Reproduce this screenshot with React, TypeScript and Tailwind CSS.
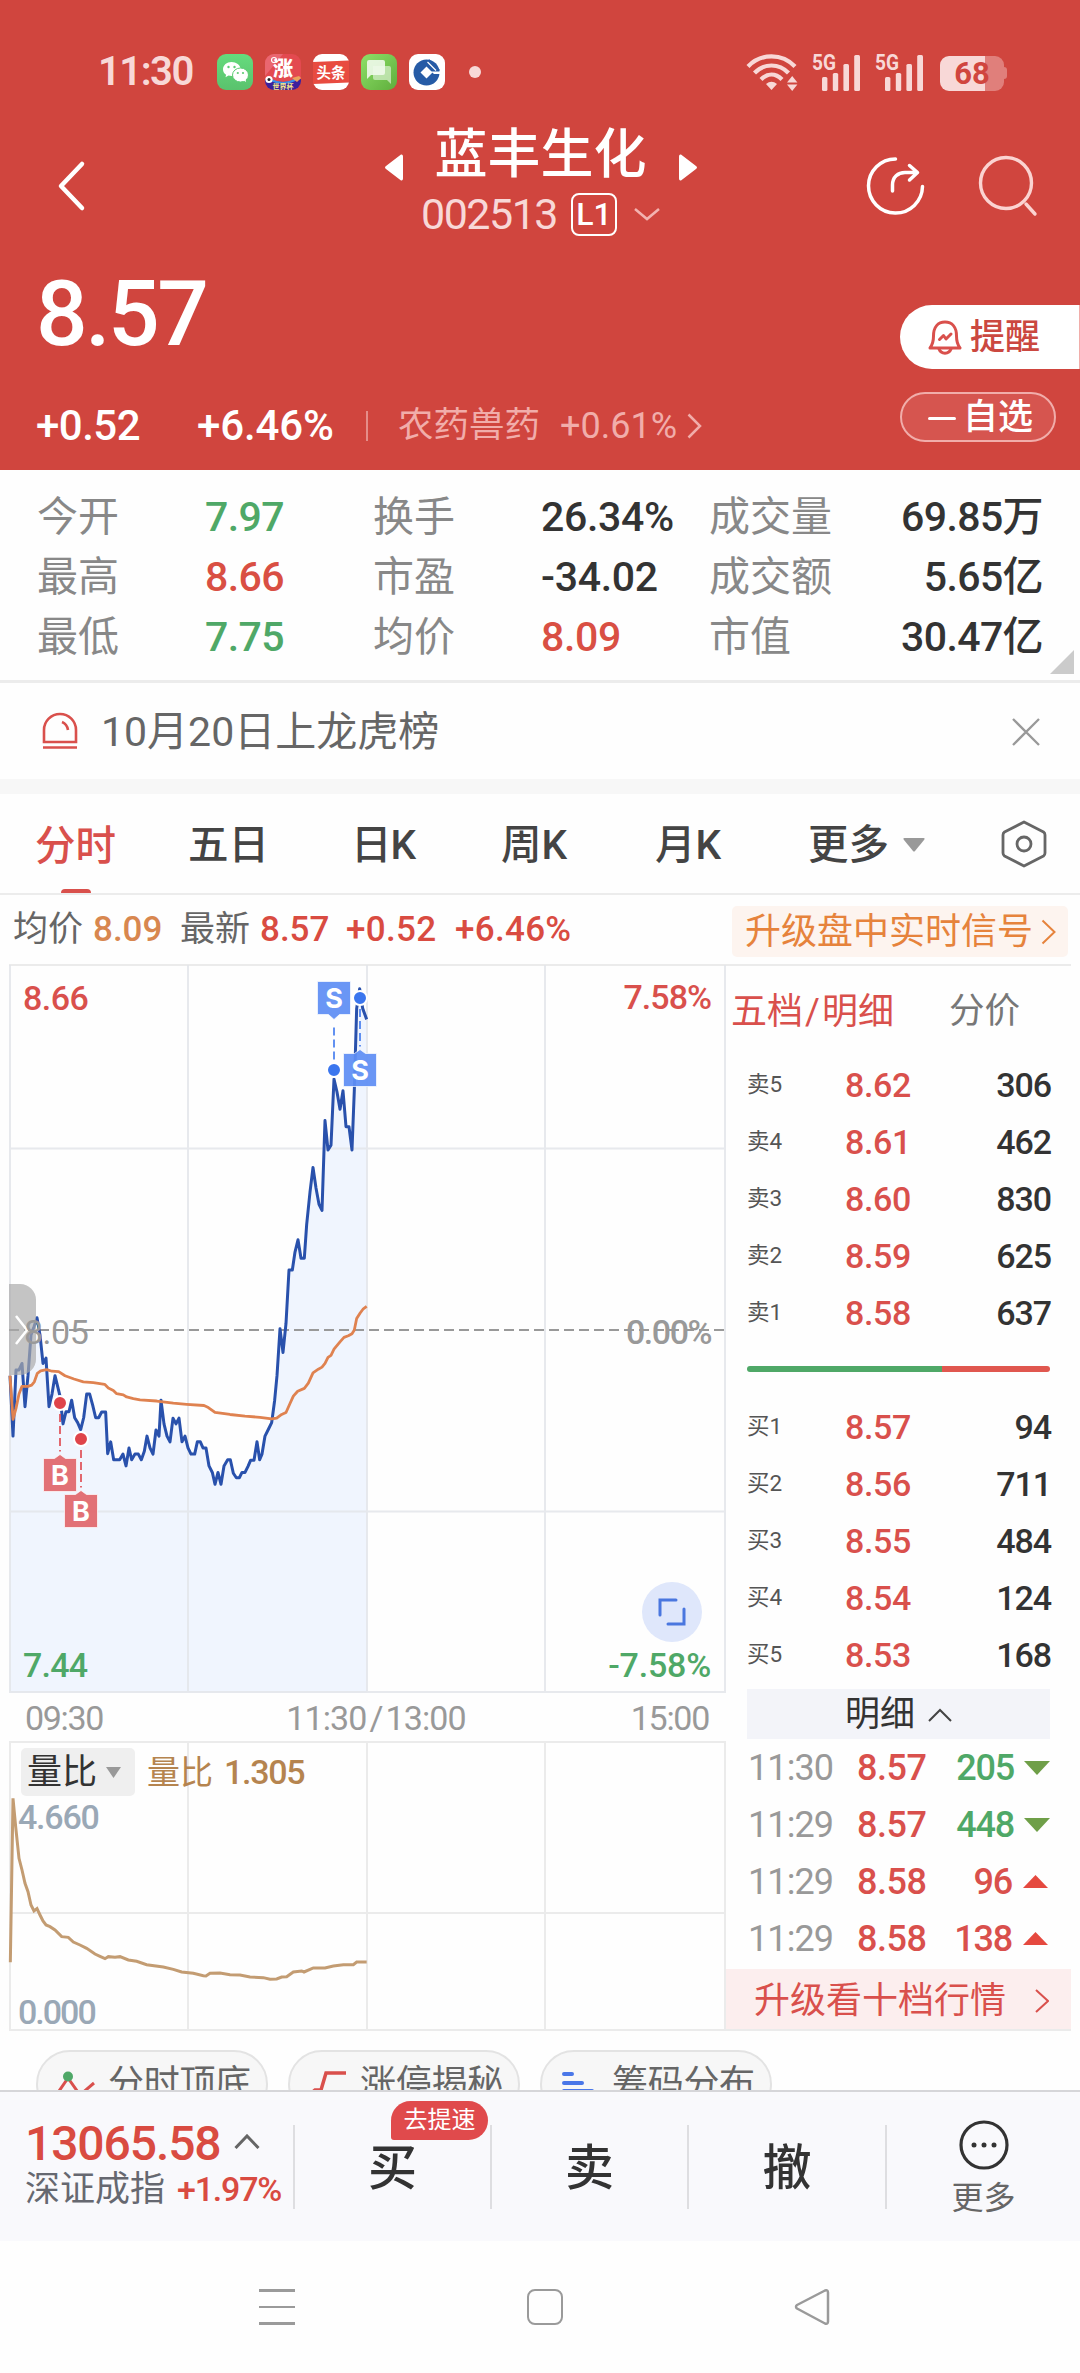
import React from "react";

const PRICE_POINTS =
  "30,1190 39,1338 48,1176 57,1176 66,1160 75,1266 84,1190 93,1090 102,1070 111,1048 120,1090 129,1160 138,1147 147,1266 156,1235 165,1190 174,1220 180,1240 189,1308 198,1278 207,1278 215,1250 224,1293 233,1305 242,1322 251,1293 260,1235 269,1235 278,1262 287,1293 296,1293 305,1279 317,1279 323,1381 332,1352 341,1396 359,1396 369,1382 378,1411 387,1367 395,1396 405,1382 415,1382 424,1396 433,1375 441,1338 450,1367 459,1382 468,1323 477,1338 483,1250 492,1308 501,1338 510,1352 519,1294 528,1308 537,1294 546,1352 555,1338 564,1367 573,1382 584,1382 592,1352 601,1352 609,1367 618,1367 627,1411 637,1427 645,1456 654,1427 663,1456 672,1411 683,1396 691,1396 700,1429 709,1440 718,1440 726,1427 735,1427 744,1412 752,1397 762,1397 771,1352 779,1396 786,1382 795,1338 806,1320 815,1305 824,1250 831,1190 840,1075 849,1133 858,1062 867,931 877,931 885,887 894,857 903,902 913,902 920,820 930,740 939,680 948,730 957,770 966,785 975,565 984,637 993,625 1002,463 1011,495 1020,537 1029,492 1038,580 1047,580 1056,637 1063,490 1070,290 1079,242 1088,290 1100,317";

const AVERAGE_POINTS =
  "30,1190 39,1297 48,1270 57,1235 66,1216 84,1216 95,1213 103,1205 112,1184 122,1178 140,1175 156,1179 176,1180 195,1190 222,1198 250,1205 280,1207 314,1211 325,1220 340,1226 350,1234 370,1237 380,1242 400,1246 420,1249 470,1252 520,1257 560,1260 612,1263 625,1268 645,1280 690,1285 735,1289 780,1292 815,1296 830,1294 845,1285 858,1280 870,1258 880,1240 893,1228 913,1221 925,1208 939,1183 955,1174 966,1169 975,1160 984,1145 993,1140 1002,1125 1020,1107 1032,1096 1045,1092 1056,1087 1063,1078 1070,1050 1080,1037 1090,1026 1100,1020";

const RATIO_POINTS =
  "31,1327 39,835 47,920 57,1015 66,1050 75,1090 84,1115 93,1155 102,1173 111,1166 120,1185 129,1203 138,1215 150,1220 165,1230 185,1250 205,1252 220,1266 240,1275 260,1285 285,1302 300,1309 315,1316 325,1310 345,1312 360,1310 385,1320 410,1324 440,1334 490,1341 520,1348 545,1356 580,1360 610,1367 618,1368 630,1360 660,1359 690,1364 720,1365 750,1371 790,1373 810,1378 830,1377 845,1371 860,1370 880,1356 905,1353 912,1356 940,1344 975,1344 1000,1338 1030,1334 1060,1334 1070,1326 1100,1326";

function Signal() {
  return (
    <svg className="h-[38px] w-[50px] overflow-visible" viewBox="0 0 50 38">
      <text x="0" y="17" fontFamily="Roboto" fontWeight="700" fontSize="21.5" textLength="24" lengthAdjust="spacingAndGlyphs" fill="#f8d8d7">
        5G
      </text>
      <g fill="#f8d8d7">
        <rect x="10" y="24" width="5.4" height="14" rx="1.5" />
        <rect x="20.8" y="20" width="5.4" height="18" rx="1.5" />
        <rect x="31.4" y="11" width="5.6" height="27" rx="1.5" />
        <rect x="42.2" y="2" width="5.8" height="36" rx="1.5" />
      </g>
    </svg>
  );
}

function StatusBar() {
  return (
    <div className="flex h-[144px] items-center pl-[98px] pr-[73px] text-[#f8d8d7]">
      <div className="w-[119px] text-[40px] font-semibold leading-none tracking-[-1.5px]">11:30</div>
      <div className="flex gap-[12px]">
        <svg className="size-9" viewBox="0 0 36 36">
          <defs>
            <linearGradient id="wx" x1="0" y1="0" x2="0" y2="1">
              <stop offset="0" stopColor="#65db7d" />
              <stop offset="1" stopColor="#5ac26d" />
            </linearGradient>
          </defs>
          <rect width="36" height="36" rx="9" fill="url(#wx)" />
          <path d="M14.500 8C9.800 8 6 11.200 6 15.200c0 2.300 1.200 4.200 3.100 5.500L8.500 23.200l3-1.600c1 .3 2 .4 3 .4C19.200 22 23.500 19 23.500 15S19.200 8 14.500 8Z" fill="#fff" />
          <ellipse cx="23.500" cy="21" rx="8" ry="7" fill="#fff" stroke="#5ecb73" strokeWidth="1" />
          <path d="m26 26 3 2-.5-3.500z" fill="#fff" />
          <g fill="#5ecb73">
            <circle cx="11.500" cy="13" r="1.200" /><circle cx="17.500" cy="13" r="1.200" />
            <circle cx="20.800" cy="19" r="1.100" /><circle cx="26" cy="19" r="1.100" />
          </g>
        </svg>
        <svg className="size-9" viewBox="0 0 36 36">
          <defs><clipPath id="zc"><rect width="36" height="36" rx="9" /></clipPath></defs>
          <g clipPath="url(#zc)">
            <rect width="36" height="36" fill="#e34a50" />
            <path d="M0 0h18L0 22z" fill="#ea6670" />
            <path d="M0 25Q18 31 36 25v11H0z" fill="#3c209c" />
            <path d="M6 26Q18 32 30 26" stroke="#3d8fe8" strokeWidth="2" fill="none" />
            <circle cx="4" cy="25.500" r="3.600" fill="#fff" /><circle cx="4" cy="25.500" r="1.500" fill="#222" />
            <path d="M27 24l5 4 4-4-2-2z" fill="#eba35c" />
            <text x="8" y="22" fontFamily="Noto Sans CJK SC" fontWeight="900" fontSize="20" fill="#fff">涨</text>
            <text x="18" y="34.500" textAnchor="middle" fontFamily="Noto Sans CJK SC" fontWeight="700" fontSize="7" fill="#f4e88a">世界杯</text>
            <circle cx="9" cy="6" r="2.500" fill="none" stroke="#fff" strokeWidth="1.200" />
          </g>
        </svg>
        <svg className="size-9" viewBox="0 0 36 36">
          <rect width="36" height="36" rx="9" fill="#fff" />
          <path d="M0 8 36 6.500v22L0 30z" fill="#e84b40" />
          <text x="18" y="23.500" textAnchor="middle" fontFamily="Noto Sans CJK SC" fontWeight="700" fontSize="14.500" fill="#fff">头条</text>
        </svg>
        <svg className="size-9" viewBox="0 0 36 36">
          <defs>
            <linearGradient id="msg" x1="0" y1="0" x2="1" y2="1">
              <stop offset="0" stopColor="#8ee068" />
              <stop offset="1" stopColor="#5fae3c" />
            </linearGradient>
          </defs>
          <rect width="36" height="36" rx="9" fill="url(#msg)" />
          <path d="M12 12h16q2 0 2 2v16l-4-4H14q-2 0-2-2z" fill="#d4edc8" opacity=".75" />
          <path d="M8 6h14q2 0 2 2v11q0 2-2 2H10l-4 4V8q0-2 2-2z" fill="#f0faeb" opacity=".9" />
        </svg>
        <svg className="size-9" viewBox="0 0 36 36">
          <rect width="36" height="36" rx="9" fill="#fff" />
          <circle cx="17.500" cy="18.500" r="13" fill="#265ba6" />
          <path d="M20 5 31 16l-2.500 2L19 8z" fill="#265ba6" />
          <path d="M22 17.500 32 17.500V20L25 20z" fill="#fff" />
          <path d="m11.500 18.500 6-6 6 6-6 6z" fill="#fff" />
          <path d="m18.500 8 8.500 8.500" stroke="#fff" strokeWidth="1.300" />
        </svg>
      </div>
      <div className="ml-[24px] size-[12px] rounded-full bg-[#f8d8d7]" />
      <div className="ml-auto flex items-center">
        <svg className="mr-[12px] h-[38px] w-[54px]" viewBox="0 0 54 38" fill="none" stroke="#f8d8d7" strokeWidth="4.200">
          <path d="M2 13.500C15 0 36 0 49 13.500" />
          <path d="M8.500 20C18 10 33 10 42.500 20" />
          <path d="M15 26.500C21.500 20 29.500 20 36 26.500" />
          <path d="M25.500 37 20 31Q25.500 26.500 31 31z" fill="#f8d8d7" stroke="none" />
          <path d="m41 29.500 5.200-6.500 5.200 6.500zM41 31.500h10.400L46.200 38z" fill="#f8d8d7" stroke="none" />
        </svg>
        <Signal />
        <div className="w-[13px]" />
        <Signal />
        <div className="ml-[15px] mt-[2px] flex items-center">
          <div className="flex h-[35px] w-[64px] items-center justify-center rounded-[9px] bg-[linear-gradient(90deg,#f8d8d7_0_45px,#e07f7b_45px)] text-[31px] font-bold leading-none text-[#d0453e]">68</div>
          <div className="h-[12px] w-[3px] rounded-r-sm bg-[#e07f7b]" />
        </div>
      </div>
    </div>
  );
}

function TitleBar() {
  return (
    <div className="flex h-[116px] justify-between">
      <svg className="ml-[55px] mt-[15px] h-[54px] w-[34px] shrink-0" viewBox="0 0 34 54" fill="none" stroke="#fff" strokeWidth="4.500" strokeLinecap="round" strokeLinejoin="round">
        <path d="M27 5 6 27 27 49" />
      </svg>
      <div className="-mr-[40px] ml-[90px] flex w-[400px] shrink-0 flex-col items-center">
        <div className="-mt-[19px] flex h-[61px] items-center">
          <svg className="mt-[24px] h-[27px] w-[18px]" viewBox="0 0 18 27" fill="#fff"><path d="M16 .5q2-.5 2 2v22q0 2.500-2 2L1 15q-2-1.500 0-3z" /></svg>
          <div className="mx-[32px] text-[53px] font-medium leading-none text-white">蓝丰生化</div>
          <svg className="mt-[24px] h-[27px] w-[18px] rotate-180" viewBox="0 0 18 27" fill="#fff"><path d="M16 .5q2-.5 2 2v22q0 2.500-2 2L1 15q-2-1.500 0-3z" /></svg>
        </div>
        <div className="flex h-[56px] items-center">
          <div className="text-[43px] leading-none tracking-[-1.500px] text-[#f8d8d7]">002513</div>
          <div className="ml-[14px] flex h-[43px] w-[46px] items-center justify-center rounded-[8px] border-2 border-white text-[32px] font-medium leading-none text-white">L1</div>
          <svg className="ml-[17px] h-[14px] w-[26px]" viewBox="0 0 26 14" fill="none" stroke="#f3b3b0" strokeWidth="2.500"><path d="m1 2 12 10L25 2" /></svg>
        </div>
      </div>
      <div className="mt-[9px] flex gap-[51px] pr-[41px]">
        <svg className="size-[64px]" viewBox="0 0 64 64" fill="none" stroke="#fff" strokeWidth="3.500" strokeLinecap="round" strokeLinejoin="round">
          <path d="M33.500 6A27 27 0 1 0 60.500 33.500" />
          <path d="M30.500 38v-6C30.500 24 36 19.500 43 19.500h12M47.500 12.500 55.500 19.500l-8 7.500" />
        </svg>
        <svg className="h-[64px] w-[62px]" viewBox="0 0 62 64" fill="none" stroke="#fbd3d1" strokeWidth="3.400" strokeLinecap="round">
          <circle cx="29" cy="30" r="25.500" />
          <path d="m49 51 9 10" />
        </svg>
      </div>
    </div>
  );
}

function Quote() {
  return (
    <div className="flex h-[210px]">
      <div className="flex flex-1 flex-col pl-[36px]">
        <div className="mt-[9px] text-[91px] font-medium leading-[90px] tracking-[-2.500px] text-white">8.57</div>
        <div className="mt-[45px] flex h-[44px] items-center leading-none">
          <div className="w-[161px] text-[42px] font-medium tracking-[-0.500px] text-white">+0.52</div>
          <div className="w-[169px] text-[42px] font-medium tracking-[-0.100px] text-white">+6.46%</div>
          <div className="h-[30px] w-[2px] bg-[#e58d89]" />
          <div className="ml-[30px] text-[35.500px] text-[#f1adaa]">农药兽药</div>
          <div className="ml-[20px] text-[36px] text-[#f1adaa]">+0.61%</div>
          <svg className="ml-[10px] h-[26px] w-[15px]" viewBox="0 0 15 26" fill="none" stroke="#f1adaa" strokeWidth="2.500"><path d="m1.500 1.500 11.500 11.500-11.500 11.500" /></svg>
        </div>
      </div>
      <div className="flex w-[180px] flex-col">
        <div className="mt-[45px] flex h-[64px] items-center rounded-l-full border-r border-[#f1adaa] bg-white pl-[28px]">
          <svg className="h-[36px] w-[34px]" viewBox="0 0 34 36" fill="none" stroke="#d9504c" strokeWidth="3" strokeLinejoin="round" strokeLinecap="round">
            <path d="M5.500 17C5.500 8 10 3 17 3s11.500 5 11.500 14c0 5 .5 8 3.500 12H2c3-4 3.500-7 3.500-12Z" />
            <path d="M11 30c2 5.500 10 5.500 12 0M11.500 20.500l4-4 2.500 3.500 5-5" />
          </svg>
          <div className="ml-[8px] mt-[1px] text-[35px] font-medium leading-none text-[#cb4840]">提醒</div>
        </div>
        <div className="mt-[23px] flex h-[50px] w-[156px] items-center rounded-full border-2 border-[#f1adaa] bg-[#d6554f] pl-[26px]">
          <div className="mt-[2px] h-[3px] w-[28px] rounded bg-white" />
          <div className="ml-[7px] text-[35px] font-medium leading-none text-white">自选</div>
        </div>
      </div>
    </div>
  );
}

const STATS: [string, string, string, string, string, string][] = [
  ["今开", "7.97", "换手", "26.34%", "成交量", "69.85万"],
  ["最高", "8.66", "市盈", "-34.02", "成交额", "5.65亿"],
  ["最低", "7.75", "均价", "8.09", "市值", "30.47亿"],
];

function Stats() {
  return (
    <div className="relative h-[213px] shrink-0 border-b-[3px] border-[#ececec] pt-[17px]">
      {STATS.map((r, i) => (
        <div key={r[0]} className="flex h-[60px] items-center pl-[37px] text-[41px] leading-none text-[#333]">
          <div className="w-[168px] text-[#888]">{r[0]}</div>
          <div className={"w-[168px] font-medium tracking-[-0.600px] " + (i === 1 ? "text-[#d94f43]" : "text-[#4fa867]")}>{r[1]}</div>
          <div className="w-[168px] text-[#888]">{r[2]}</div>
          <div className={"w-[168px] font-medium tracking-[-0.300px] " + (i === 2 ? "text-[#d94f43]" : "")}>{r[3]}</div>
          <div className="text-[#888]">{r[4]}</div>
          <div className="ml-auto pr-[37px] font-medium tracking-[-0.600px]">{r[5]}</div>
        </div>
      ))}
      <svg className="absolute bottom-[6px] right-[6px] h-[24px] w-[24px]" viewBox="0 0 24 24" fill="#cbcbcb"><path d="M24 0v24H0z" /></svg>
    </div>
  );
}

function Notice() {
  return (
    <div className="flex h-[96px] shrink-0 items-center pl-[41px] pr-[40px]">
      <svg className="h-[38px] w-[38px]" viewBox="0 0 38 38" fill="none" stroke="#d9504c" strokeWidth="2.600">
        <path d="M3 30V18a16 16 0 0 1 32 0v12zM2 35.500h34M21 10q5 2 6 8" />
      </svg>
      <div className="ml-[22px] mt-[3px] text-[41px] leading-none text-[#666]">10月20日上龙虎榜</div>
      <svg className="ml-auto mt-[2px] size-[28px]" viewBox="0 0 28 28" stroke="#999" strokeWidth="2.300"><path d="m1 1 26 26M27 1 1 27" /></svg>
    </div>
  );
}

function Tabs() {
  return (
    <div className="flex h-[101px] shrink-0 items-center border-b-2 border-[#ececec] pl-[35px] text-[40.500px] font-medium leading-none text-[#444]">
      <div className="flex h-full w-[153px] flex-col text-[#d9504c]">
        <div className="mt-[32px]">分时</div>
        <div className="ml-[26px] mt-auto h-[4px] w-[30px] rounded-t bg-[#d9504c]" />
      </div>
      <div className="mt-[4px] w-[163px]">五日</div>
      <div className="mt-[4px] w-[150px] tracking-[-1px]">日K</div>
      <div className="mt-[4px] w-[154px]">周K</div>
      <div className="mt-[4px] w-[153px]">月K</div>
      <div className="mt-[4px]">更多</div>
      <svg className="ml-[14px] mt-[2px] h-[14px] w-[22px]" viewBox="0 0 22 14" fill="#999"><path d="M1.500 0h19q2 0 .5 2l-9 11q-1 1-2 0L1 2Q-.5 0 1.500 0" /></svg>
      <svg className="ml-[76px] h-[48px] w-[46px]" viewBox="0 0 46 48" fill="none" stroke="#666" strokeWidth="2.800" strokeLinejoin="round">
        <path d="M23 2 42.500 12q1.500 1 1.500 3v18q0 2-1.500 3L23 46 3.500 36Q2 35 2 33V15q0-2 1.500-3z" />
        <circle cx="23" cy="24" r="7" />
      </svg>
    </div>
  );
}

function QuoteLine() {
  return (
    <div className="mr-[9px] flex h-[69px] shrink-0 items-center pl-[13px] text-[35px] leading-none text-[#666]">
      <div className="w-[80px]">均价</div>
      <div className="w-[87px] font-medium text-[#d8874f]">8.09</div>
      <div className="w-[80px]">最新</div>
      <div className="w-[86px] font-medium text-[#d94b41]">8.57</div>
      <div className="w-[109px] font-medium tracking-[0.300px] text-[#d94b41]">+0.52</div>
      <div className="font-medium tracking-[0.300px] text-[#d94b41]">+6.46%</div>
      <div className="ml-auto mr-[3px] mt-[4px] flex h-[51px] w-[336px] items-center rounded-[5px] bg-[#fdf4ef] pl-[13px] text-[36px] text-[#e6833c]">
        升级盘中实时信号
        <svg className="ml-[8px] h-[26px] w-[15px]" viewBox="0 0 15 26" fill="none" stroke="#e6833c" strokeWidth="2"><path d="m1.500 1.500 12 11.500-12 11.500" /></svg>
      </div>
    </div>
  );
}

type MarkerProps = { x: number; dotY: number; boxY: number; label: string; color: string; dot: string };

function Marker({ x, dotY, boxY, label, color, dot }: MarkerProps) {
  const below = boxY > dotY;
  const tip = below ? boxY - 4 : boxY + 38;
  return (
    <g>
      <line x1={x} x2={x} y1={below ? dotY + 11 : tip + 8} y2={below ? tip - 3 : dotY - 7} stroke={dot} strokeOpacity="0.8" strokeWidth="2" strokeDasharray="8 4" />
      <circle cx={x} cy={dotY} r="7" fill={dot} stroke="#fff" strokeWidth="2" />
      <path
        d={
          below
            ? `M${x - 16.5} ${boxY}h11l5.500-4 5.500 4h11v33h-33z`
            : `M${x - 16.5} ${boxY}h33v33h-11l-5.500 5-5.500-5h-11z`
        }
        fill={color}
        stroke="#fff"
        strokeOpacity="0.7"
        strokeWidth="1"
      />
      <text x={x} y={boxY + 26} textAnchor="middle" fontFamily="Inter" fontWeight="700" fontSize="27" fill="#fff">{label}</text>
    </g>
  );
}

function PriceChart() {
  return (
    <div className="relative h-[728px] text-[34px] font-medium leading-none">
      <svg className="block h-[728px] w-[727px]" viewBox="0 965 727 728">
        <polygon transform="translate(0 890) scale(0.33333 0.40816)" points={`${PRICE_POINTS} 1100,1967 30,1967`} fill="#f0f5fe" />
        <path d="M9 1148.500h716M9 1511.500h716M188 965v728M367 965v728M545 965v728M10 965v728M725 965v728M9 1692h717" fill="none" stroke="#e3e5ea" strokeOpacity="0.85" strokeWidth="2" />
        <path d="M9 1330h715" stroke="#999" strokeWidth="2" strokeDasharray="10 5" />
        <g transform="translate(0 890) scale(0.33333 0.40816)" fill="none" strokeLinejoin="round">
          <polyline points={PRICE_POINTS} stroke="#2951ac" strokeWidth="3" vectorEffect="non-scaling-stroke" />
          <polyline points={AVERAGE_POINTS} stroke="#df8250" strokeWidth="2.800" vectorEffect="non-scaling-stroke" />
        </g>
        <Marker x={334} dotY={1070} boxY={981.5} label="S" color="#5f8ff4ee" dot="#3b76ee" />
        <Marker x={360} dotY={998} boxY={1053.5} label="S" color="#5f8ff4ee" dot="#3b76ee" />
        <Marker x={60} dotY={1403} boxY={1458.5} label="B" color="#e1676cee" dot="#df444a" />
        <Marker x={81} dotY={1439} boxY={1494.5} label="B" color="#e1676cee" dot="#df444a" />
      </svg>
      <div className="absolute left-[9px] top-[319px] flex h-[91px] w-[27px] items-center rounded-r-[16px] bg-[#aaaaaab0]">
        <svg className="ml-[6px] h-[30px] w-[13px]" viewBox="0 0 13 30" fill="none" stroke="#fff" strokeWidth="2.500"><path d="m1 1 11 14L1 29" /></svg>
      </div>
      <div className="absolute left-[23px] top-[16px] tracking-[-0.500px] text-[#d9504c]">8.66</div>
      <div className="absolute right-[15px] top-[15px] tracking-[-1px] text-[#d9504c]">7.58%</div>
      <div className="absolute left-[24px] top-[350px] font-normal tracking-[-0.500px] text-[#999]">8.05</div>
      <div className="absolute right-[15px] top-[350px] tracking-[-1.500px] text-[#999]">0.00%</div>
      <div className="absolute left-[23px] top-[683px] tracking-[-0.800px] text-[#4fa867]">7.44</div>
      <div className="absolute right-[15px] top-[683px] tracking-[-0.200px] text-[#4fa867]">-7.58%</div>
      <div className="absolute left-[642px] top-[617px] flex size-[60px] items-center justify-center rounded-full bg-[#dfe7fb]">
        <svg className="size-[30px]" viewBox="0 0 30 30" fill="none" stroke="#4a77df" strokeWidth="3" strokeLinecap="round"><path d="M3 18V3h16M27 12v15H11" /></svg>
      </div>
    </div>
  );
}

function RatioChart() {
  return (
    <div className="relative h-[290px] text-[34px] leading-none">
      <svg className="block h-[290px] w-[727px]" viewBox="0 1741 727 290">
        <path d="M9 1742h717M9 1913h716M9 2030h717M188 1742v288M367 1742v288M545 1742v288M10 1742v288M725 1742v288" stroke="#ebebeb" strokeWidth="2" fill="none" />
        <g transform="translate(0 1520) scale(0.33333)">
          <polyline points={RATIO_POINTS} fill="none" stroke="#c39c72" strokeWidth="3" vectorEffect="non-scaling-stroke" />
        </g>
      </svg>
      <div className="absolute left-[21px] top-[7px] flex h-[48px] w-[114px] items-center rounded-[5px] bg-[#efefef] pl-[6px] pt-[1px] text-[35px] text-[#333]">
        量比
        <svg className="ml-[9px] h-[11px] w-[15px]" viewBox="0 0 15 11" fill="#999"><path d="M0 0h15L7.500 11z" /></svg>
      </div>
      <div className="absolute left-[147px] top-[14px] flex items-center whitespace-nowrap font-medium tracking-[-1.300px] text-[#b5844f]">
        <span className="w-[77px] text-[33px] font-normal tracking-normal">量比</span>1.305
      </div>
      <div className="absolute left-[18px] top-[59px] font-medium tracking-[-1.200px] text-[#9aa8b6]">4.660</div>
      <div className="absolute left-[18px] top-[254px] font-medium tracking-[-2px] text-[#9aa8b6]">0.000</div>
    </div>
  );
}

function Level({ name, price, qty }: { name: string; price: string; qty: string }) {
  return (
    <div className="flex h-[57px] items-center pl-[21px] pr-[20px] text-[34px] leading-none">
      <div className="w-[98px] text-[22.500px] text-[#555]">{name}</div>
      <div className="font-medium tracking-[-0.400px] text-[#d9504c]">{price}</div>
      <div className="ml-auto font-medium tracking-[-1.100px] text-[#333]">{qty}</div>
    </div>
  );
}

const SELLS = [["卖5", "8.62", "306"], ["卖4", "8.61", "462"], ["卖3", "8.60", "830"], ["卖2", "8.59", "625"], ["卖1", "8.58", "637"]];
const BUYS = [["买1", "8.57", "94"], ["买2", "8.56", "711"], ["买3", "8.55", "484"], ["买4", "8.54", "124"], ["买5", "8.53", "168"]];
const TICKS: [string, string, string, boolean][] = [
  ["11:30", "8.57", "205", false],
  ["11:29", "8.57", "448", false],
  ["11:29", "8.58", "96", true],
  ["11:29", "8.58", "138", true],
];

function OrderBook() {
  return (
    <div className="flex w-[345px] flex-col">
      <div className="flex h-[90px] items-center pl-[5px] pt-[1px] text-[36px] leading-none">
        <div className="w-[218px] text-[#d9504c]">五档<span className="px-[2px]">/</span>明细</div>
        <div className="text-[35.500px] text-[#777]">分价</div>
      </div>
      {SELLS.map((r) => <Level key={r[0]} name={r[0]} price={r[1]} qty={r[2]} />)}
      <div className="mx-[21px] mb-[26px] mt-[25px] flex h-[6px] shrink-0 overflow-hidden rounded-full">
        <div className="w-[195px] bg-[#4fa867]" />
        <div className="flex-1 bg-[#e0574f]" />
      </div>
      {BUYS.map((r) => <Level key={r[0]} name={r[0]} price={r[1]} qty={r[2]} />)}
      <div className="mx-[21px] mt-[6px] flex h-[50px] items-center justify-center bg-[#f3f4f9] pt-[1px] text-[35px] leading-none text-[#333]">
        明细
        <svg className="ml-[13px] h-[14px] w-[24px]" viewBox="0 0 24 14" fill="none" stroke="#444" strokeWidth="2"><path d="M1 13 12 2l11 11" /></svg>
      </div>
      {TICKS.map((t, i) => (
        <div key={i} className="flex h-[57px] items-center pl-[22px] pr-[21px] text-[36px] leading-none">
          <div className="w-[109px] tracking-[-0.900px] text-[#999]">{t[0]}</div>
          <div className="font-medium tracking-[-0.500px] text-[#d9504c]">{t[1]}</div>
          <div className={"ml-auto font-medium tracking-[-1.200px] " + (t[3] ? "text-[#d9504c]" : "text-[#4fa867]")}>{t[2]}</div>
          {t[3] ? (
            <svg className="ml-[11px] mr-[2px] h-[13px] w-[25px]" viewBox="0 0 25 13" fill="#e5493f"><path d="M12.500 0 25 13H0z" /></svg>
          ) : (
            <svg className="ml-[10px] h-[14px] w-[26px]" viewBox="0 0 26 14" fill="#6f9f48"><path d="M13 14 0 0h26z" /></svg>
          )}
        </div>
      ))}
      <div className="mb-[2px] mt-auto flex h-[62px] items-center border-b-2 border-[#ebebeb] bg-[#fceeee] pl-[28px] pr-[22px] pt-[3px] text-[36px] leading-none text-[#d9504c]">
        升级看十档行情
        <svg className="ml-auto h-[24px] w-[14px]" viewBox="0 0 14 24" fill="none" stroke="#d9504c" strokeWidth="2"><path d="m1 1 12 11L1 23" /></svg>
      </div>
    </div>
  );
}

function Chip({ children, label }: { children: React.ReactNode; label: string }) {
  return (
    <div className="flex h-[68px] w-[232px] shrink-0 items-center rounded-[34px] border-2 border-[#e3e3e3] bg-[#f7f7f7] pl-[18px] text-[36px] leading-none text-[#666]">
      {children}
      <div className="ml-[12px] tracking-[-0.300px]">{label}</div>
    </div>
  );
}

function Chips() {
  return (
    <div className="flex h-[57px] shrink-0 gap-[20px] overflow-hidden pl-[36px] pt-[17px]">
      <Chip label="分时顶底">
        <svg className="h-[36px] w-[40px]" viewBox="0 0 40 36" fill="none" stroke="#d9504c" strokeWidth="3"><path d="M1 28 12 12 24 29 38 17" /><circle cx="12" cy="10.500" r="5" fill="#4fa867" stroke="none" /></svg>
      </Chip>
      <Chip label="涨停揭秘">
        <svg className="h-[36px] w-[40px]" viewBox="0 0 40 36" fill="none" stroke="#d9504c" strokeWidth="3.500"><path d="M1 29 7 24h6L18 7h20" /></svg>
      </Chip>
      <Chip label="筹码分布">
        <svg className="h-[36px] w-[40px]" viewBox="0 0 40 36" fill="none" stroke="#4a77e8" strokeWidth="4" strokeLinecap="round"><path d="M4 8h8M4 17h18M4 25h28" /></svg>
      </Chip>
    </div>
  );
}

function BottomBar() {
  return (
    <div className="flex h-[151px] shrink-0 items-center border-t-2 border-[#d6d6d9] bg-[#f9f9fc] leading-none">
      <div className="-mt-[6px] flex w-[293px] shrink-0 flex-col pl-[25px]">
        <div className="flex items-center text-[48px] font-medium leading-[46px] tracking-[-1.100px] text-[#d94b41]">
          13065.58
          <svg className="-mt-[4px] ml-[13px] h-[15px] w-[26px]" viewBox="0 0 26 15" fill="none" stroke="#666" strokeWidth="3"><path d="M1.500 14 13 2l11.500 12" /></svg>
        </div>
        <div className="mt-[5px] flex items-center whitespace-nowrap text-[35px] text-[#666870]">
          深证成指<span className="ml-[12px] text-[34px] font-medium tracking-[-1.200px] text-[#d94b41]">+1.97%</span>
        </div>
      </div>
      <div className="relative flex h-[84px] w-[197px] items-center justify-center border-l-2 border-[#dedee1] text-[49px] font-medium text-[#333]">
        <span className="mt-[4px]">买</span>
        <div className="absolute left-[96px] top-[-24px] flex h-[39px] w-[97px] items-center justify-center rounded-[20px] rounded-bl-[3px] bg-[#e04a4c] text-[24px] font-normal text-white">去提速</div>
      </div>
      <div className="flex h-[84px] w-[197px] items-center justify-center border-l-2 border-[#dedee1] pt-[4px] text-[49px] font-medium text-[#333]">卖</div>
      <div className="flex h-[84px] w-[198px] items-center justify-center border-l-2 border-[#dedee1] pt-[4px] text-[49px] font-medium text-[#333]">撤</div>
      <div className="flex h-[84px] flex-1 flex-col items-center justify-center border-l-2 border-[#dedee1] text-[32px] text-[#666]">
        <svg className="mb-[12px] size-[50px] shrink-0" viewBox="0 0 50 50" fill="none" stroke="#333" strokeWidth="3.200">
          <circle cx="25" cy="25" r="23" />
          <g fill="#333" stroke="none"><circle cx="15" cy="25" r="2.500" /><circle cx="25" cy="25" r="2.500" /><circle cx="35" cy="25" r="2.500" /></g>
        </svg>
        更多
      </div>
    </div>
  );
}

function NavBar() {
  return (
    <div className="flex h-[132px] shrink-0 items-center bg-[#fefefe] pl-[259px]">
      <div className="flex w-[268px] flex-col gap-[14px]">
        <div className="h-[2.500px] w-[36px] bg-[#9a9a9a]" />
        <div className="h-[2.500px] w-[36px] bg-[#9a9a9a]" />
        <div className="h-[2.500px] w-[36px] bg-[#9a9a9a]" />
      </div>
      <div className="size-[36px] rounded-[8px] border-[2.500px] border-[#9a9a9a]" />
      <svg className="ml-[231px] h-[38px] w-[36px]" viewBox="0 0 36 38" fill="none" stroke="#9a9a9a" strokeWidth="2.500" strokeLinejoin="round"><path d="M31 2.500 3 17q-2 1.500 0 3.500L31 35.500q3 1 3-2V4.500q0-3-3-2z" /></svg>
    </div>
  );
}

export default function App() {
  return (
    <div className="flex h-[2373px] w-[1080px] flex-col overflow-hidden bg-[#fefefe] font-[Roboto,'Noto_Sans_CJK_SC',sans-serif]">
      <header className="shrink-0 bg-[#d0453e]">
        <StatusBar />
        <TitleBar />
        <Quote />
      </header>
      <Stats />
      <Notice />
      <div className="h-[15px] shrink-0 bg-[#f7f7f7]" />
      <Tabs />
      <QuoteLine />
      <div className="ml-[9px] mr-[9px] h-0 shrink-0 border-t-2 border-[#ebebeb]" />
      <main className="flex h-[1067px] shrink-0">
        <div className="-mt-[1px] w-[726px] shrink-0">
          <PriceChart />
          <div className="flex h-[48px] items-center justify-between pl-[25px] pr-[17px] pt-[1px] text-[34px] leading-none text-[#999]">
            <span className="tracking-[-1.300px]">09:30</span>
            <span className="pl-[18px] tracking-[-0.900px]">11:30<span className="px-[3px]">/</span>13:00</span>
            <span className="tracking-[-1.300px]">15:00</span>
          </div>
          <RatioChart />
        </div>
        <OrderBook />
      </main>
      <Chips />
      <BottomBar />
      <NavBar />
    </div>
  );
}
